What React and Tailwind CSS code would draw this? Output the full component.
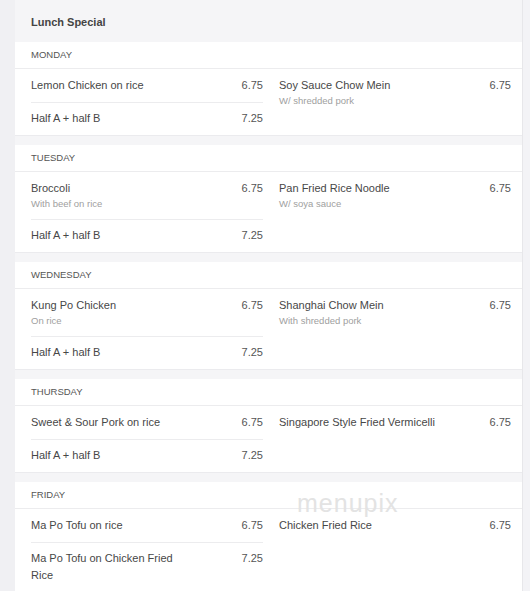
import React from "react";

const days = [
  {
    day: "Monday",
    left: [
      { name: "Lemon Chicken on rice", price: "6.75" },
      { name: "Half A + half B", price: "7.25" },
    ],
    right: [{ name: "Soy Sauce Chow Mein", desc: "W/ shredded pork", price: "6.75" }],
  },
  {
    day: "Tuesday",
    left: [
      { name: "Broccoli", desc: "With beef on rice", price: "6.75" },
      { name: "Half A + half B", price: "7.25" },
    ],
    right: [{ name: "Pan Fried Rice Noodle", desc: "W/ soya sauce", price: "6.75" }],
  },
  {
    day: "Wednesday",
    left: [
      { name: "Kung Po Chicken", desc: "On rice", price: "6.75" },
      { name: "Half A + half B", price: "7.25" },
    ],
    right: [{ name: "Shanghai Chow Mein", desc: "With shredded pork", price: "6.75" }],
  },
  {
    day: "Thursday",
    left: [
      { name: "Sweet & Sour Pork on rice", price: "6.75" },
      { name: "Half A + half B", price: "7.25" },
    ],
    right: [{ name: "Singapore Style Fried Vermicelli", price: "6.75" }],
  },
  {
    day: "Friday",
    left: [
      { name: "Ma Po Tofu on rice", price: "6.75" },
      { name: "Ma Po Tofu on Chicken Fried Rice", price: "7.25" },
    ],
    right: [{ name: "Chicken Fried Rice", price: "6.75" }],
  },
];

const Item = ({ item, first }) => {
  return (
    <div className={`flex justify-between pb-2 ${first ? "pt-2" : "pt-[7px] border-t border-[#ececee]"}`}>
      <div className="w-[70%]">
        <div className="text-[11px] leading-[17px] text-[#474747]">{item.name}</div>
        {item.desc && <div className="text-[9.5px] leading-[14px] text-[#a0a0a0]">{item.desc}</div>}
      </div>
      <div className="text-[11px] leading-[17px] text-[#555]">{item.price}</div>
    </div>
  );
};

const Column = ({ items }) => {
  return (
    <div className="flex flex-col">
      {items.map((item, index) => (
        <Item key={index} item={item} first={index === 0} />
      ))}
    </div>
  );
};

export default function App() {
  return (
    <div className="flex min-h-[591px] bg-[#f0f0f3] font-['Liberation_Sans',Arial,sans-serif]">
      {/* left strip */}
      <div className="w-[15px] shrink-0"></div>

      {/* menu card */}
      <div className="relative flex-1 flex flex-col gap-[10px] pt-[1px] bg-[#f5f5f7] border-r border-[#e7e7ea] overflow-hidden">
        <div className="h-[41px] -mb-[10px] px-4 pt-[1px] flex items-center text-[11px] font-bold text-[#444]">
          Lunch Special
        </div>

        {days.map((section) => (
          <section key={section.day} className="bg-white shadow-[0_1px_0_#ebebee]">
            <div className="h-[27px] px-4 flex items-center border-b border-[#ececee] text-[9.5px] uppercase text-[#555]">
              {section.day}
            </div>
            <div className="grid grid-cols-2 gap-x-4 pl-4 pr-[11px]">
              <Column items={section.left} />
              <Column items={section.right} />
            </div>
          </section>
        ))}

        {/* watermark */}
        <div className="absolute left-[282px] top-[491px] text-[25px] leading-[24px] tracking-[1px] text-[#e3e3e3] pointer-events-none">
          menupix
        </div>
      </div>

      {/* right strip */}
      <div className="w-[7px] shrink-0 bg-[#f3f3f6]"></div>
    </div>
  );
}
